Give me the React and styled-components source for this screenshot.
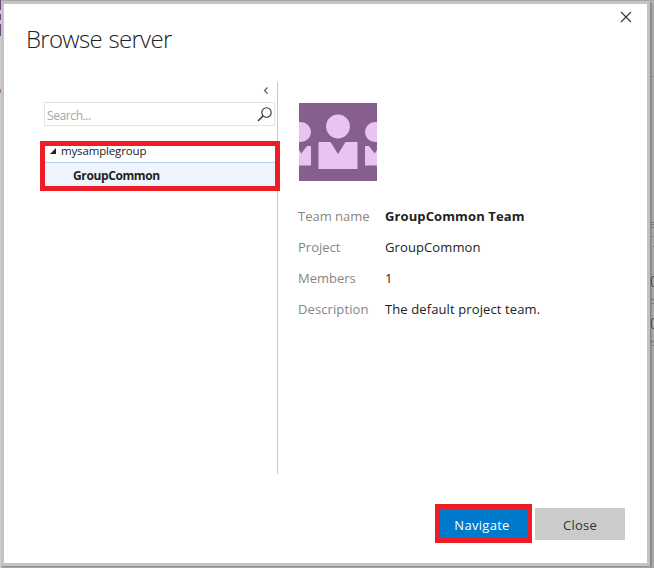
import React from 'react';
import styled, { createGlobalStyle } from 'styled-components';

const Global = createGlobalStyle`
  * { box-sizing: border-box; }
  body { margin: 0; overflow: hidden; background: #b0b0b0; font-family: "Open Sans", "Noto Sans", sans-serif; color: #222; }
`;
const Screen = styled.div`
  position: relative; width: 654px; height: 568px; padding: 1px; overflow: hidden;
  background: #b3b3b3;
`;
const Backdrop = styled.svg`position: absolute; left: 0; top: 0;`;
const Dialog = styled.main`
  position: relative; display: flex; flex-direction: column;
  width: 649px; height: 565px; border: 3px solid #c3c3c3; background: #fff;
  box-shadow: 1px 1px 2px rgba(0,0,0,.25);
`;
const Header = styled.header`
  display: flex; justify-content: space-between; align-items: flex-start; height: 78px; padding: 7px 15px 0 22px;
`;
const Title = styled.h1`
  margin: 11px 0 0; font-size: 24px; font-weight: 300; line-height: 34px; letter-spacing: -0.7px; word-spacing: 1px; white-space: nowrap;
`;
const IconButton = styled.button`
  display: flex; padding: 0; border: 0; background: none;
`;
const Body = styled.div`display: flex; height: 392px;`;
const Sidebar = styled.aside`
  width: 274px; padding: 0 2px 0 40px; border-right: 1px solid #c8c8c8;
`;
const Collapse = styled.div`display: flex; justify-content: flex-end; height: 20px; padding: 5px 6px 0 0;`;
const Search = styled.div`
  display: flex; align-items: center; justify-content: space-between; height: 24px; padding: 0 1px 0 2px;
  border: 1px solid #e4e4e4; color: #a5a5a5; font-size: 12px; letter-spacing: -0.4px;
`;
const Placeholder = styled.span`padding-top: 2px;`;
const Tree = styled.div`position: relative; margin-top: 14px;`;
const TreeRow = styled.div`
  display: flex; align-items: center; height: ${p => (p.$selected ? 25 : 22)}px; margin-right: -1px;
  padding: ${p => (p.$selected ? '2px 0 0 28px' : '0 0 0 6px')}; gap: 5px; font-size: ${p => (p.$selected ? 12 : 11.5)}px; line-height: 16px;
  font-weight: ${p => (p.$selected ? 700 : 400)};
  letter-spacing: ${p => (p.$selected ? -0.38 : -0.15)}px;
  background: ${p => (p.$selected ? '#eef4fe' : '#fff')};
  border: solid #b5d2f2; border-width: ${p => (p.$selected ? '1px' : '0')};
`;
const Highlight = styled.div`
  position: absolute; left: ${p => p.$x}px; top: ${p => p.$y}px; width: ${p => p.$w}px; height: ${p => p.$h}px;
  border: 5px solid #ee1c25; pointer-events: none;
`;
const Details = styled.section`padding: 21px 0 0 21px;`;
const Avatar = styled.svg`display: block;`;
const Facts = styled.dl`
  display: grid; grid-template-columns: 87px auto; grid-auto-rows: 31px; align-items: center;
  margin: 19px 0 0 -1px; font-size: 13px; white-space: nowrap;
`;
const Label = styled.dt`color: #858585; letter-spacing: ${p => p.$track || 0}px;`;
const Value = styled.dd`
  margin: 0; font-weight: ${p => (p.$bold ? 700 : 400)}; letter-spacing: 0.11px;
`;
const Footer = styled.footer`
  display: flex; gap: 4px; justify-content: flex-end; margin-top: 34px; padding-right: 22px;
`;
const Button = styled.button`
  width: ${p => (p.$primary ? 92 : 90)}px; height: 32px; padding: 2px ${p => (p.$primary ? 6 : 0)}px 0 0; border: 0;
  font: 13px/20px "Open Sans", "Noto Sans", sans-serif; letter-spacing: ${p => (p.$primary ? 0.3 : 0.2)}px;
  color: ${p => (p.$primary ? '#fff' : '#333')}; background: ${p => (p.$primary ? '#007acc' : '#cbcbcb')};
`;
const FooterItem = styled.div`position: relative;`;

function PageBehind() {
  return (
    <Backdrop width="654" height="568">
      <path d="M0 0h654v1H0z" fill="#a8a8a8" />
      <path d="M0 0h1v568H0z" fill="#d2d2d2" />
      <path d="M0 0h1v10H0zM0 14h1v6H0zM0 24h1v12H0z" fill="#77448b" />
      <path d="M0 89h1v4H0z" fill="#b5806b" />
      <path d="M650 3h2v565h-2z" fill="#a0a0a0" />
      <path d="M652 3h2v565h-2z" fill="#aaa" />
      <path d="M650 76h4v1h-4z" fill="#929292" />
      <path d="M651 222h3v1h-3zM651 224h3v1h-3zM651 227h3v1h-3z" fill="#6b7f98" />
      <path d="M651 236h3v1h-3z" fill="#959595" />
      <path d="M653 246h1v1h-1z" fill="#96764e" />
      <path d="M654 276.500h-1l-1.500 2v6l1.500 2h1M654 318.500h-1l-1.500 2v6l1.500 2h1" fill="none" stroke="#4b5868" strokeWidth="1.200" />
      <path d="M651 298h1v3h-1zM652 299h2v1h-2zM651 303h3v1h-3zM651 340h1v3h-1zM652 341h2v1h-2zM651 345h3v1h-3z" fill="#788490" />
    </Backdrop>
  );
}

function TeamAvatar() {
  return (
    <Avatar width="78" height="78" viewBox="0 0 78 78">
      <path fill="#865f8e" d="M0 0h78v78H0z" />
      <g fill="#e8c4f3">
        <circle cx="39" cy="23.500" r="11.900" />
        <circle cx="2" cy="29" r="10" />
        <circle cx="76" cy="29" r="10" />
        <path d="M19.500 39h12L39 51l7.500-12h12v27h-39zM0 47l2.300 3.500L8 43h4v19.500H0zM78 47l-2.300 3.500L70 43h-4v19.500h12z" />
      </g>
    </Avatar>
  );
}

export default function App() {
  return (
    <>
      <Global />
      <Screen>
        <PageBehind />
        <Dialog>
          <Header>
            <Title>Browse server</Title>
            <IconButton aria-label="Close dialog">
              <svg width="12" height="12" viewBox="0 0 12 12"><path d="M1 1l10 10M11 1L1 11" stroke="#333" strokeWidth="1.100" /></svg>
            </IconButton>
          </Header>
          <Body>
            <Sidebar>
              <Collapse>
                <svg width="6" height="7" viewBox="0 0 6 7"><path d="M4.500.5l-3 3 3 3" fill="none" stroke="#555" strokeWidth="1.100" /></svg>
              </Collapse>
              <Search>
                <Placeholder>Search...</Placeholder>
                <svg width="16" height="16" viewBox="0 0 16 16" fill="none" stroke="#333" strokeWidth="1.100">
                  <circle cx="9.500" cy="6.500" r="4.700" /><path d="M6 10L1 15" strokeWidth="1.500" />
                </svg>
              </Search>
              <Tree>
                <TreeRow>
                  <svg width="6" height="6" viewBox="0 0 6 6"><path d="M6 0v6H0z" fill="#222" /></svg>
                  <span>mysamplegroup</span>
                </TreeRow>
                <TreeRow $selected>GroupCommon</TreeRow>
                <Highlight $x={-4} $y={1} $w={240} $h={50} />
              </Tree>
            </Sidebar>
            <Details>
              <TeamAvatar />
              <Facts>
                <Label>Team name</Label><Value $bold>GroupCommon Team</Value>
                <Label>Project</Label><Value>GroupCommon</Value>
                <Label>Members</Label><Value>1</Value>
                <Label $track={0.1}>Description</Label><Value>The default project team.</Value>
              </Facts>
            </Details>
          </Body>
          <Footer>
            <FooterItem>
              <Button $primary>Navigate</Button>
              <Highlight $x={-4} $y={-4} $w={97} $h={39} />
            </FooterItem>
            <Button>Close</Button>
          </Footer>
        </Dialog>
      </Screen>
    </>
  );
}
